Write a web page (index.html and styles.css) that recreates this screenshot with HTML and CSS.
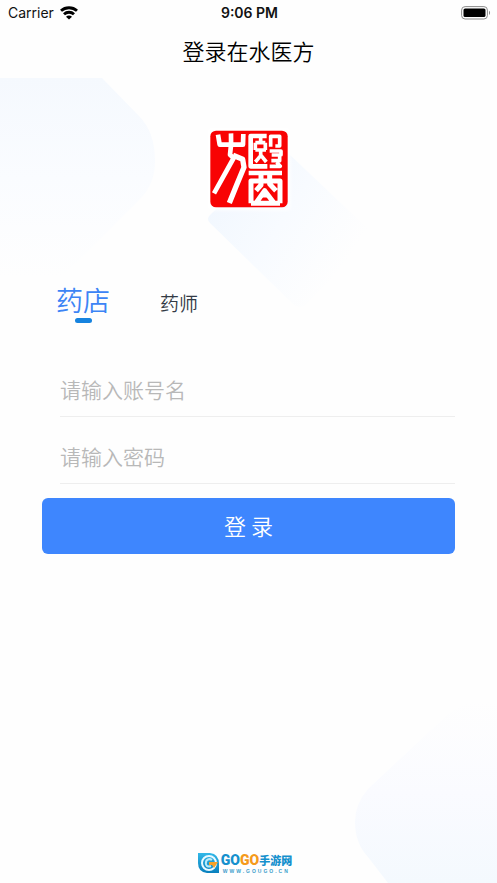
FILE: index.html
```
<!DOCTYPE html>
<html lang="zh-CN">
<head>
    <meta charset="UTF-8">
    <meta name="viewport" content="width=device-width, initial-scale=1.0">
    <title>登录在水医方</title>
    <link rel="stylesheet" href="styles.css">
</head>
<body>
    <div class="status-bar">
        <div class="carrier">
            <span>Carrier</span>
            <svg width="18" height="14" viewBox="0 0 18 14" fill="none" stroke="#000" stroke-width="2.9">
                <path d="M1 4.8C5.5 .7 12.5 .7 17 4.8"/>
                <path d="M4 8.2C6.8 5.6 11.2 5.6 14 8.2"/>
                <path d="M9 13.5L6 10.7C7.8 9.2 10.2 9.2 12 10.7Z" fill="#000" stroke="none"/>
            </svg>
        </div>
        <span class="time">9:06 PM</span>
        <svg class="battery" width="30" height="14" viewBox="0 0 30 14">
            <rect x=".6" y=".6" width="25.8" height="12.4" rx="3.5" fill="none" stroke="#8b8b8b"/>
            <rect x="2.5" y="2.5" width="22" height="8.6" rx="1.6" fill="#000"/>
            <path d="M28 4.8C29.4 5.5 29.4 8.2 28 8.9Z" fill="#888"/>
        </svg>
    </div>
    <header class="title-bar">
        <h1>登录在水医方</h1>
    </header>

    <main class="page">
        <svg class="bg-left" width="156" height="200" viewBox="0 0 156 200">
            <defs>
                <linearGradient id="fadeDown" x1="0" y1="0" x2="0" y2="1">
                    <stop offset="0" stop-color="#f5f9fe"/>
                    <stop offset=".5" stop-color="#fafcff"/>
                    <stop offset="1" stop-color="#fefefe"/>
                </linearGradient>
            </defs>
            <path d="M0 0H102L139 38Q155 54 155 83Q155 107 139 122L61 200H0Z" fill="url(#fadeDown)"/>
        </svg>
        <svg class="bg-right" width="143" height="184" viewBox="0 0 143 184">
            <defs>
                <linearGradient id="fadeUp" x1="0" y1="1" x2="0" y2="0">
                    <stop offset="0" stop-color="#f4f9fe"/>
                    <stop offset=".5" stop-color="#fafbff"/>
                    <stop offset="1" stop-color="#fefefe"/>
                </linearGradient>
            </defs>
            <path d="M143 4Q116 -4 91 18L14 90Q1 105 1 123Q1 144 14 158L34 184H143Z" fill="url(#fadeUp)"/>
        </svg>

        <div class="logo">
            <svg class="logo-shadow" width="166" height="170" viewBox="0 0 166 170">
                <defs>
                    <linearGradient id="shade" x1="0" y1=".3" x2=".8" y2=".8">
                        <stop offset="0" stop-color="#f1f7fe"/>
                        <stop offset=".5" stop-color="#f8fbff"/>
                        <stop offset="1" stop-color="#fefefe"/>
                    </linearGradient>
                </defs>
                <path d="M80 12L160 88Q166 94 160 100L100 164Q93 170 86 164L3 83Q-1 79 3 75L68 12Q74 7 80 12Z" fill="url(#shade)"/>
            </svg>
            <svg class="seal" width="78" height="78" viewBox="28 29 234 232" role="img" aria-label="医方">
                <rect x="29" y="30" width="232" height="230" rx="17" fill="#f80304"/>
                <g fill="none" stroke="#fff" stroke-width="14" stroke-linejoin="round">
                    <path d="M52 42L57 72H127L128 40"/>
                    <path d="M91 38Q93 73 88 102L99 112L40 218"/>
                    <path d="M97 104L126 116L130 140Q107 195 86 247" stroke-width="16"/>
                    <path d="M198 46H150V137H200" stroke-width="14"/>
                    <path d="M164 66H194M180 47V66M164 88H196M164 66V88M194 66V88M180 88V105L164 124M181 104L197 124" stroke-width="11"/>
                    <path d="M210 78V47H237V76H224M207 91H241V103H213M237 101V120H212M207 137H239L228 125" stroke-width="11"/>
                    <path d="M144 157H244" stroke-width="13"/>
                    <path d="M151 248V181H238V248M181 157V193L166 210M207 157V190L226 210M151 248H238M166 247L192 210L220 247" stroke-width="15"/>
                    <path d="M176 226H208M192 210V226" stroke-width="9"/>
                </g>
            </svg>
        </div>

        <form class="login-form">
            <div class="tabs">
                <button type="button" class="tab active">药店</button>
                <button type="button" class="tab">药师</button>
            </div>
            <div class="fields">
                <input type="text" class="field" aria-label="账号名" placeholder="请输入账号名">
                <input type="password" class="field" aria-label="密码" placeholder="请输入密码">
            </div>
            <button type="submit" class="login-btn">登 录</button>
        </form>

        <footer class="watermark">
            <svg width="24" height="22" viewBox="0 0 24 22">
                <defs>
                    <linearGradient id="mark" x1="0" y1="0" x2="0" y2="1">
                        <stop offset="0" stop-color="#32b8e8"/>
                        <stop offset="1" stop-color="#087fbd"/>
                    </linearGradient>
                </defs>
                <path d="M1 1H13Q22 2 22 12V21H10Q1 20 1 11Z" fill="url(#mark)"/>
                <circle cx="12" cy="11" r="7" fill="none" stroke="#e9f9ff" stroke-width="2"/>
                <path d="M15 8Q12 6 9.5 8.5Q8 12 10 14Q12 15 14 14" fill="none" stroke="#b9ebfa" stroke-width="2"/>
                <path d="M12 10H21L17 16L15 13H12Z" fill="#f6a128"/>
            </svg>
            <div class="mark-text">
                <div class="mark-name"><span class="go-blue">GO</span><span class="go-orange">GO</span><span class="mark-cn">手游网</span></div>
                <div class="mark-url">WWW.GOUGO.CN</div>
            </div>
        </footer>
    </main>
</body>
</html>
```
FILE: styles.css
```
* {
    box-sizing: border-box;
}
body {
    margin: 0;
    min-height: 100vh;
    display: flex;
    flex-direction: column;
    background: #fefefe;
    font-family: "Noto Sans CJK SC", sans-serif;
}
button,
input {
    font-family: inherit;
    border: none;
    background: none;
    padding: 0;
}
.status-bar {
    display: grid;
    grid-template-columns: 1fr auto 1fr;
    align-items: center;
    height: 25px;
    padding: 0 6px 0 8px;
    font-family: Inter, sans-serif;
    font-size: 14px;
    color: #111;
}
.carrier {
    display: flex;
    align-items: center;
    gap: 6px;
}
.time {
    font-weight: 600;
}
.battery {
    justify-self: end;
}
.title-bar {
    height: 53px;
    text-align: center;
}
.title-bar h1 {
    margin: 0;
    font-size: 22px;
    font-weight: 350;
    line-height: 50px;
    color: #000;
}
.page {
    position: relative;
    flex: 1;
    display: flex;
    flex-direction: column;
    padding: 52px 42px 9px;
}
.bg-left {
    position: absolute;
    left: 0;
    top: 0;
}
.bg-right {
    position: absolute;
    right: 0;
    bottom: 0;
}
.logo {
    position: relative;
    align-self: center;
    height: 78px;
}
.logo-shadow {
    position: absolute;
    left: -3px;
    top: 10px;
}
.seal {
    position: relative;
    display: block;
    box-shadow: 0 0 4px 2px #fff;
}
.login-form {
    position: relative;
    margin-top: 72px;
}
.tabs {
    display: flex;
    align-items: flex-end;
    gap: 50px;
    height: 43px;
    padding-left: 14px;
}
.tab {
    position: relative;
    height: 43px;
    padding-top: 2px;
    font-size: 19px;
    font-weight: 350;
    line-height: 39px;
    color: #333a45;
}
.tab.active {
    padding: 0 0 4px;
    font-size: 27px;
    color: #3c84f5;
}
.tab.active::after {
    content: "";
    position: absolute;
    left: 50%;
    bottom: 0;
    width: 17px;
    height: 5px;
    margin-left: -8px;
    border-radius: 3px;
    background: #1683df;
}
.fields {
    margin: 27px 0 14px 18px;
}
.field {
    display: block;
    width: 100%;
    height: 67px;
    padding-top: 12px;
    border-bottom: 1px solid #eee;
    border-radius: 0;
    outline: none;
    font-size: 21px;
    font-weight: 350;
    color: #333;
}
.field::placeholder {
    color: #b8b8b8;
    opacity: 1;
}
.login-btn {
    display: block;
    width: 100%;
    height: 56px;
    padding-bottom: 2px;
    border-radius: 6px;
    background: #3e86fe;
    color: #fff;
    font-size: 22px;
    font-weight: 350;
}
.watermark {
    position: relative;
    display: flex;
    align-items: center;
    justify-content: center;
    margin-top: auto;
    padding-right: 8px;
}
.mark-text {
    display: flex;
    flex-direction: column;
}
.mark-name {
    display: flex;
    align-items: center;
    height: 16px;
    font-family: Roboto, sans-serif;
    font-size: 14px;
    font-weight: 900;
    line-height: 16px;
}
.go-blue {
    color: #1590cd;
}
.go-orange {
    color: #f59a1b;
}
.mark-cn {
    font-family: "Noto Sans CJK SC", sans-serif;
    font-size: 11px;
    color: #1590cd;
}
.mark-url {
    height: 6px;
    padding-left: 2px;
    font-family: "Liberation Sans", sans-serif;
    font-size: 5px;
    font-weight: 700;
    line-height: 6px;
    letter-spacing: 2px;
    color: #3a9dcb;
}
```
